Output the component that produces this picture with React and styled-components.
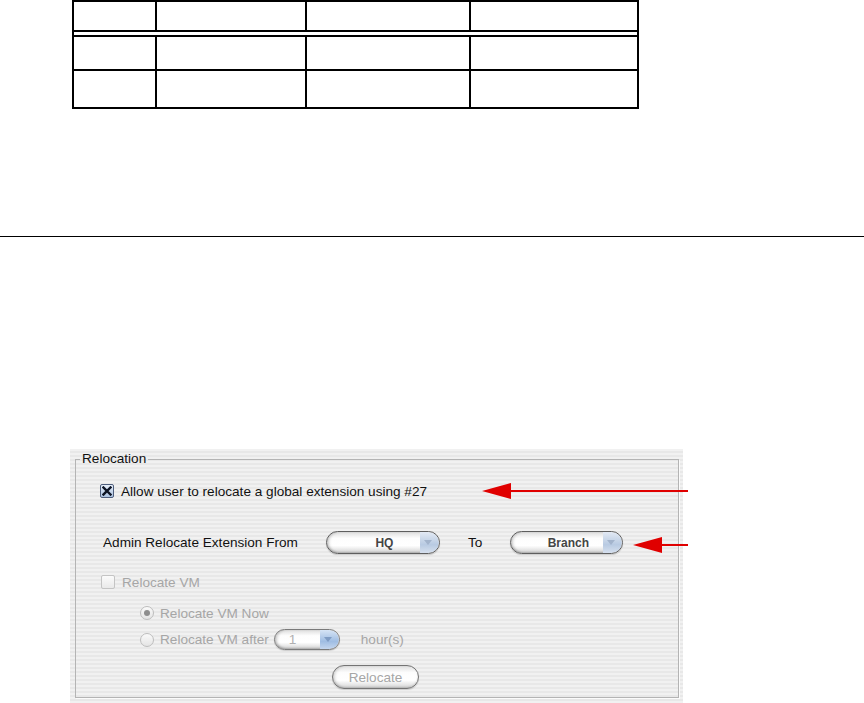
import React from 'react';
import styled, { createGlobalStyle } from 'styled-components';

const GlobalStyle = createGlobalStyle`
  html, body {
    margin: 0;
    padding: 0;
    background: #fff;
    overflow: hidden;
  }
  body {
    font-family: "Liberation Sans", Arial, sans-serif;
  }
`;

const Page = styled.div`
  position: relative;
  width: 864px;
  height: 703px;
  display: flex;
  flex-direction: column;
`;

/* ---- empty document table ---- */
const Grid = styled.div`
  margin-left: 72px;
  width: 567px;
  display: grid;
  grid-template-columns: 81px 148px 162px 166px;
  grid-template-rows: 28px 3px 32px 36px;
  gap: 2px;
  padding: 2px;
  box-sizing: border-box;
  background: #000;
`;

const Cell = styled.div`
  background: #fff;
`;

const Spacer = styled.div`
  grid-column: 1 / -1;
  background: #fff;
`;

const Rule = styled.hr`
  margin: 127px 0 0;
  border: 0;
  border-top: 1px solid #000;
  width: 100%;
`;

/* ---- aqua style settings panel ---- */
const Panel = styled.div`
  margin: 212px 0 0 70px;
  width: 613px;
  height: 254px;
  box-sizing: border-box;
  padding: 2px 4px 0 5px;
  background: repeating-linear-gradient(
    to bottom,
    #f1f1f1 0px,
    #f1f1f1 2px,
    #e8e8e8 2px,
    #e8e8e8 4px
  );
  font-size: 13.6px;
  color: #111;
`;

const Group = styled.fieldset`
  margin: 0;
  padding: 0 0 8px 0;
  border: 1px solid #b4b4b4;
  box-shadow: 1px 1px 0 #fbfbfb;
  display: flex;
  flex-direction: column;
`;

const Legend = styled.legend`
  margin-left: 4px;
  padding: 0 2px;
  line-height: 16px;
  color: #111;
`;

const Row = styled.div`
  display: flex;
  align-items: center;
  height: ${(p) => p.$h || 20}px;
  margin-top: ${(p) => p.$top}px;
  padding-left: ${(p) => p.$indent}px;
  gap: ${(p) => p.$gap || 0}px;
  justify-content: ${(p) => (p.$center ? 'center' : 'flex-start')};
`;

const Label = styled.span`
  color: ${(p) => (p.$disabled ? '#a6a6a6' : '#111')};
  white-space: nowrap;
  margin-left: ${(p) => p.$ml || 0}px;
`;

const Box = styled.span`
  width: 14px;
  height: 14px;
  box-sizing: border-box;
  border-radius: 2px;
  display: inline-flex;
  align-items: center;
  justify-content: center;
  flex: none;
  border: 1px solid ${(p) => (p.$checked ? '#4d5d7c' : '#c4c4c4')};
  background: ${(p) =>
    p.$checked
      ? 'linear-gradient(to bottom, #e6eef9, #aac1e0)'
      : 'linear-gradient(to bottom, #fbfbfb, #e9e9e9)'};
`;

const Radio = styled.span`
  width: 14px;
  height: 14px;
  box-sizing: border-box;
  border-radius: 50%;
  flex: none;
  display: inline-flex;
  align-items: center;
  justify-content: center;
  border: 1px solid #bdbdbd;
  background: linear-gradient(to bottom, #fafafa, #e4e4e4);

  &::after {
    content: '';
    display: ${(p) => (p.$on ? 'block' : 'none')};
    width: 6px;
    height: 6px;
    border-radius: 50%;
    background: #8e8e8e;
  }
`;

const Combo = styled.div`
  width: ${(p) => p.$w}px;
  height: ${(p) => p.$h || 23}px;
  box-sizing: border-box;
  border-radius: 12px;
  border: 1px solid ${(p) => (p.$disabled ? '#7a7a7a' : '#5e5e5e')};
  background: linear-gradient(to bottom, #dedede 0%, #fdfdfd 30%, #fff 65%, #d2d2d2 100%);
  box-shadow: inset 3px 0 3px -1px rgba(0, 0, 0, 0.18), inset 0 -1px 2px rgba(0, 0, 0, 0.18),
    0 1px 1px rgba(0, 0, 0, 0.15);
  display: flex;
  align-items: center;
  overflow: hidden;
  flex: none;
`;

const ComboText = styled.span`
  flex: 1;
  text-align: ${(p) => (p.$left ? 'left' : 'center')};
  padding-left: ${(p) => (p.$left ? 14 : 22)}px;
  font-size: ${(p) => (p.$left ? 13.6 : 12)}px;
  font-weight: ${(p) => (p.$left ? 'normal' : 'bold')};
  color: ${(p) => (p.$left ? '#b0b0b0' : '#454545')};
`;

const ComboArrow = styled.span`
  width: 19px;
  align-self: stretch;
  display: flex;
  align-items: center;
  justify-content: center;
  background: ${(p) =>
    p.$strong
      ? 'linear-gradient(to bottom, #d6e4f5, #9fbde3 60%, #c4d6ee)'
      : 'linear-gradient(to bottom, #e3eaf4, #b8cae2 60%, #d6e0ee)'};
  border-radius: 0 11px 11px 0;

  &::after {
    content: '';
    border-left: 4px solid transparent;
    border-right: 4px solid transparent;
    border-top: 5px solid ${(p) => (p.$strong ? '#7f9cc4' : '#a3b4cc')};
    margin-right: 3px;
  }
`;

const Button = styled.div`
  width: 87px;
  height: 24px;
  box-sizing: border-box;
  border-radius: 12px;
  border: 1px solid #747474;
  background: linear-gradient(to bottom, #e0e0e0 0%, #fdfdfd 30%, #fff 65%, #d4d4d4 100%);
  box-shadow: inset 3px 0 3px -1px rgba(0, 0, 0, 0.15), inset 0 -1px 2px rgba(0, 0, 0, 0.15),
    0 1px 1px rgba(0, 0, 0, 0.15);
  display: flex;
  align-items: center;
  justify-content: center;
  color: #a6a6a6;
  margin-left: -3px;
`;

const Overlay = styled.svg`
  position: absolute;
  left: 0;
  top: 0;
  pointer-events: none;
`;

const CheckMark = () => (
  <svg width="10" height="10" viewBox="0 0 10 10">
    <path d="M1.5 1.5 L8.5 8.5 M8.5 1.5 L1.5 8.5" stroke="#0d1424" strokeWidth="2.4" strokeLinecap="square" />
  </svg>
);

const Arrow = ({ tip, y, end }) => (
  <g fill="#e00000" stroke="#e00000">
    <line x1={tip + 20} y1={y} x2={end} y2={y} strokeWidth="2" />
    <polygon points={`${tip},${y} ${tip + 29},${y - 8} ${tip + 29},${y + 8}`} stroke="none" />
  </g>
);

export default function App() {
  const cells = Array.from({ length: 4 });
  return (
    <Page>
      <GlobalStyle />
      <Grid>
        {cells.map((_, i) => <Cell key={`h${i}`} />)}
        <Spacer />
        {cells.map((_, i) => <Cell key={`a${i}`} />)}
        {cells.map((_, i) => <Cell key={`b${i}`} />)}
      </Grid>

      <Rule />

      <Panel>
        <Group>
          <Legend>Relocation</Legend>
          <Row $top={14} $indent={24}>
            <Box $checked><CheckMark /></Box>
            <Label $ml={7}>Allow user to relocate a global extension using #27</Label>
          </Row>
          <Row $top={30} $h={23} $indent={27} $gap={28}>
            <Label>Admin Relocate Extension From</Label>
            <Combo $w={114}>
              <ComboText>HQ</ComboText>
              <ComboArrow />
            </Combo>
            <Label>To</Label>
            <Combo $w={113}>
              <ComboText>Branch</ComboText>
              <ComboArrow />
            </Combo>
          </Row>
          <Row $top={20} $h={16} $indent={25}>
            <Box />
            <Label $disabled $ml={7}>Relocate VM</Label>
          </Row>
          <Row $top={15} $h={16} $indent={64}>
            <Radio $on />
            <Label $disabled $ml={6}>Relocate VM Now</Label>
          </Row>
          <Row $top={8} $h={21} $indent={64}>
            <Radio />
            <Label $disabled $ml={6}>Relocate VM after</Label>
            <Label $ml={5} as="div">
              <Combo $w={66} $h={21} $disabled>
                <ComboText $left>1</ComboText>
                <ComboArrow $strong />
              </Combo>
            </Label>
            <Label $disabled $ml={21}>hour(s)</Label>
          </Row>
          <Row $top={15} $h={24} $center>
            <Button>Relocate</Button>
          </Row>
        </Group>
      </Panel>

      <Overlay width="864" height="703">
        <Arrow tip={482} y={491} end={688} />
        <Arrow tip={633} y={545} end={688} />
      </Overlay>
    </Page>
  );
}
